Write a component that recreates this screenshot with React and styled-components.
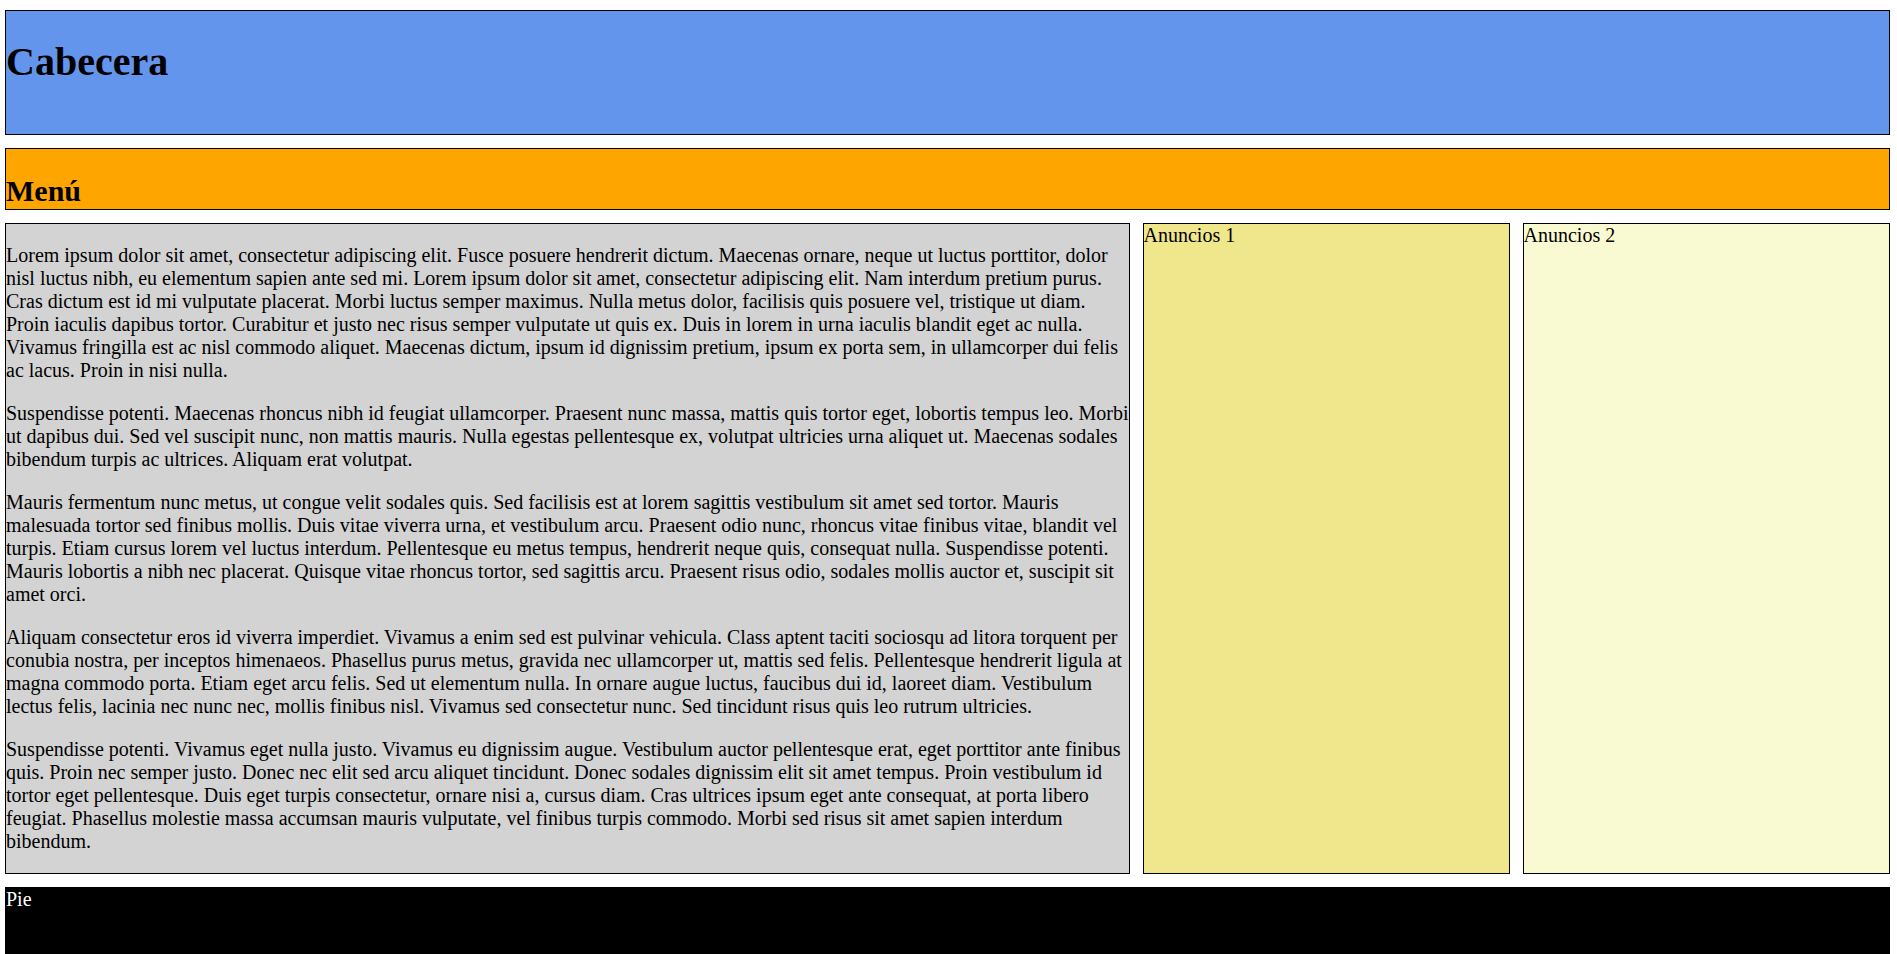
import styled, { createGlobalStyle } from "styled-components";

const GlobalStyle = createGlobalStyle`
  html, body {
    margin: 0;
    padding: 0;
    background: #fff;
  }
  body {
    font-family: "Liberation Serif", "Times New Roman", serif;
    font-size: 20px;
    color: #000;
  }
`;

const Page = styled.div`
  display: grid;
  grid-template-columns: 1125px 1fr 1fr;
  column-gap: 12.5px;
  row-gap: 13px;
  padding: 10px 7px 0 5px;
`;

const Header = styled.header`
  grid-column: 1 / -1;
  height: 123px;
  background-color: cornflowerblue;
  border: 1px solid #000;

  h1 {
    margin: 27px 0;
    font-size: 40px;
    font-weight: bold;
  }
`;

const Menu = styled.nav`
  grid-column: 1 / -1;
  height: 60px;
  background-color: orange;
  border: 1px solid #000;

  h2 {
    margin: 25px 0 0;
    font-size: 30px;
    font-weight: bold;
  }
`;

const Main = styled.main`
  background-color: lightgray;
  border: 1px solid #000;

  p {
    margin: 20px 0;
    line-height: 23px;
  }
`;

const Aside = styled.aside`
  background-color: ${(p) => p.$bg};
  border: 1px solid #000;
  line-height: 23px;
`;

const Footer = styled.footer`
  grid-column: 1 / -1;
  height: 100px;
  background-color: #000;
  color: #fff;
  border: 1px solid #000;
  line-height: 23px;
`;

const paragraphs = [
  "Lorem ipsum dolor sit amet, consectetur adipiscing elit. Fusce posuere hendrerit dictum. Maecenas ornare, neque ut luctus porttitor, dolor nisl luctus nibh, eu elementum sapien ante sed mi. Lorem ipsum dolor sit amet, consectetur adipiscing elit. Nam interdum pretium purus. Cras dictum est id mi vulputate placerat. Morbi luctus semper maximus. Nulla metus dolor, facilisis quis posuere vel, tristique ut diam. Proin iaculis dapibus tortor. Curabitur et justo nec risus semper vulputate ut quis ex. Duis in lorem in urna iaculis blandit eget ac nulla. Vivamus fringilla est ac nisl commodo aliquet. Maecenas dictum, ipsum id dignissim pretium, ipsum ex porta sem, in ullamcorper dui felis ac lacus. Proin in nisi nulla.",
  "Suspendisse potenti. Maecenas rhoncus nibh id feugiat ullamcorper. Praesent nunc massa, mattis quis tortor eget, lobortis tempus leo. Morbi ut dapibus dui. Sed vel suscipit nunc, non mattis mauris. Nulla egestas pellentesque ex, volutpat ultricies urna aliquet ut. Maecenas sodales bibendum turpis ac ultrices. Aliquam erat volutpat.",
  "Mauris fermentum nunc metus, ut congue velit sodales quis. Sed facilisis est at lorem sagittis vestibulum sit amet sed tortor. Mauris malesuada tortor sed finibus mollis. Duis vitae viverra urna, et vestibulum arcu. Praesent odio nunc, rhoncus vitae finibus vitae, blandit vel turpis. Etiam cursus lorem vel luctus interdum. Pellentesque eu metus tempus, hendrerit neque quis, consequat nulla. Suspendisse potenti. Mauris lobortis a nibh nec placerat. Quisque vitae rhoncus tortor, sed sagittis arcu. Praesent risus odio, sodales mollis auctor et, suscipit sit amet orci.",
  "Aliquam consectetur eros id viverra imperdiet. Vivamus a enim sed est pulvinar vehicula. Class aptent taciti sociosqu ad litora torquent per conubia nostra, per inceptos himenaeos. Phasellus purus metus, gravida nec ullamcorper ut, mattis sed felis. Pellentesque hendrerit ligula at magna commodo porta. Etiam eget arcu felis. Sed ut elementum nulla. In ornare augue luctus, faucibus dui id, laoreet diam. Vestibulum lectus felis, lacinia nec nunc nec, mollis finibus nisl. Vivamus sed consectetur nunc. Sed tincidunt risus quis leo rutrum ultricies.",
  "Suspendisse potenti. Vivamus eget nulla justo. Vivamus eu dignissim augue. Vestibulum auctor pellentesque erat, eget porttitor ante finibus quis. Proin nec semper justo. Donec nec elit sed arcu aliquet tincidunt. Donec sodales dignissim elit sit amet tempus. Proin vestibulum id tortor eget pellentesque. Duis eget turpis consectetur, ornare nisi a, cursus diam. Cras ultrices ipsum eget ante consequat, at porta libero feugiat. Phasellus molestie massa accumsan mauris vulputate, vel finibus turpis commodo. Morbi sed risus sit amet sapien interdum bibendum.",
];

export default function App() {
  return (
    <>
      <GlobalStyle />
      <Page>
        <Header>
          <h1>Cabecera</h1>
        </Header>
        <Menu>
          <h2>Menú</h2>
        </Menu>
        <Main>
          {paragraphs.map((text, i) => (
            <p key={i}>{text}</p>
          ))}
        </Main>
        <Aside $bg="khaki">Anuncios 1</Aside>
        <Aside $bg="lightgoldenrodyellow">Anuncios 2</Aside>
        <Footer>Pie</Footer>
      </Page>
    </>
  );
}
